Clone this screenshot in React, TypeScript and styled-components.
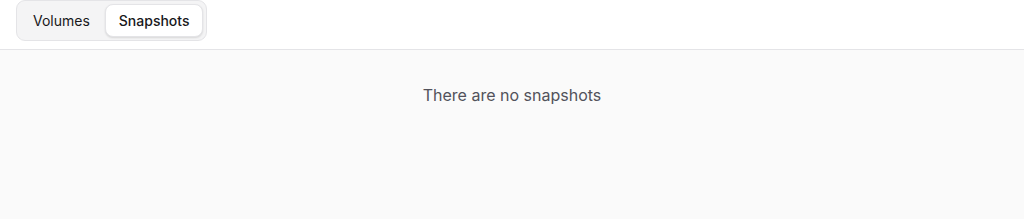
import React from "react";
import styled, { createGlobalStyle } from "styled-components";

const Global = createGlobalStyle`
  html, body { margin: 0; padding: 0; }
  body { font-family: Inter, "Noto Sans", sans-serif; background: #fafafa; }
`;

const Page = styled.div`
  display: flex;
  flex-direction: column;
  height: 219px;
  background: #fafafa;
`;

const Header = styled.div`
  display: flex;
  align-items: flex-start;
  height: 49px;
  padding: 0 16px;
  background: #ffffff;
  border-bottom: 1px solid #e4e4e7;
`;

const TabList = styled.div`
  display: flex;
  align-items: center;
  gap: 2px;
  height: 41px;
  padding: 0 3px 0 2px;
  box-sizing: border-box;
  background: #f4f4f5;
  border: 1px solid #e4e4e7;
  border-radius: 9px;
`;

const Tab = styled.button<{ $active?: boolean }>`
  height: 33px;
  padding: 0 12px 0 13px;
  border: 1px solid ${(p) => (p.$active ? "#e4e4e7" : "transparent")};
  border-radius: 8px;
  background: ${(p) => (p.$active ? "#ffffff" : "transparent")};
  box-shadow: ${(p) => (p.$active ? "0 1px 2px rgba(0,0,0,0.12)" : "none")};
  font-family: Inter, sans-serif;
  font-size: 14px;
  font-weight: ${(p) => (p.$active ? 500 : 400)};
  color: #18181b;
  cursor: pointer;
`;

const Body = styled.div`
  flex: 1;
  display: flex;
  justify-content: center;
  padding-top: 35px;
`;

const Empty = styled.p`
  margin: 0;
  font-size: 16px;
  line-height: 20px;
  color: #52525b;
`;

export default function App() {
  return (
    <>
      <Global />
      <Page>
        <Header>
          <TabList>
            <Tab>Volumes</Tab>
            <Tab $active>Snapshots</Tab>
          </TabList>
        </Header>
        <Body>
          <Empty>There are no snapshots</Empty>
        </Body>
      </Page>
    </>
  );
}
